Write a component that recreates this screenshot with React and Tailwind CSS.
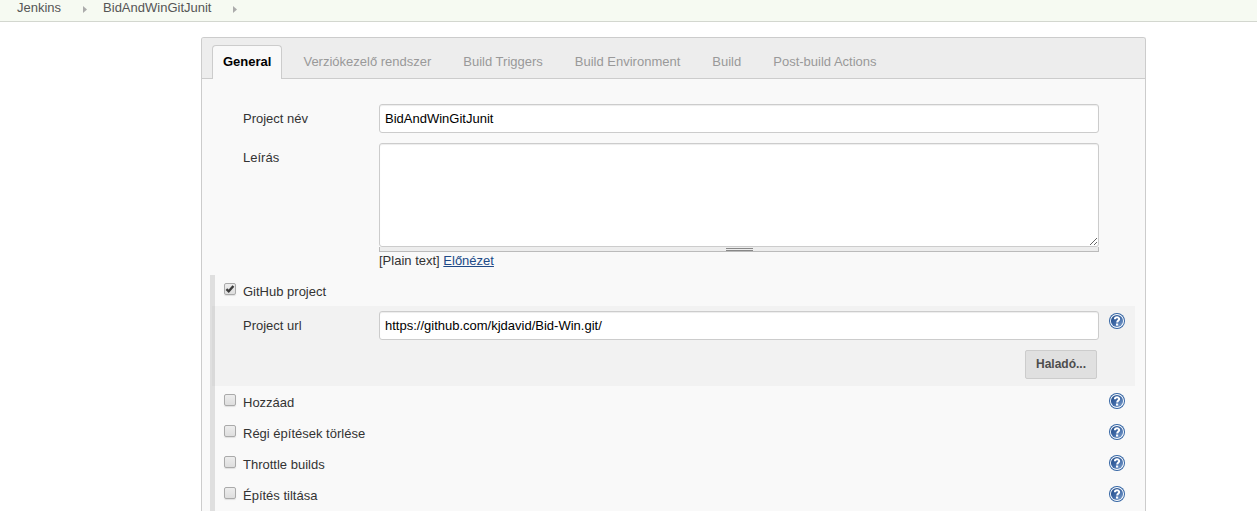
import React, { useId, useState } from "react";

const TABS = [
  "General",
  "Verziókezelő rendszer",
  "Build Triggers",
  "Build Environment",
  "Build",
  "Post-build Actions",
];

const OPTIONS = ["Hozzáad", "Régi építések törlése", "Throttle builds", "Építés tiltása"];

const FIELD =
  "block w-full rounded-[3px] border border-[#ccc] bg-white px-[5px] text-[13px] text-black shadow-[inset_0_1px_1px_rgba(0,0,0,0.075)] outline-none";

function Crumb({ children }) {
  return (
    <li className="flex items-start">
      <a href="#" className="text-[#555]">
        {children}
      </a>
      <svg className="mr-4 ml-[22px] mt-[6px] h-[7px] w-1" viewBox="0 0 4 7" aria-hidden="true">
        <path d="M0 0L4 3.5L0 7Z" fill="#ababab" />
      </svg>
    </li>
  );
}

function HelpButton({ label }) {
  const id = useId();
  return (
    <button type="button" aria-label={label} className="block size-4 shrink-0">
      <svg viewBox="0 0 16 16" className="size-4">
        <defs>
          <linearGradient id={id} x1="0" y1="0" x2="1" y2="1">
            <stop offset="0" stopColor="#204a87" />
            <stop offset="0.5" stopColor="#3f69a6" />
            <stop offset="1" stopColor="#86a8d4" />
          </linearGradient>
        </defs>
        <circle cx="8" cy="8" r="8" fill="#3465a4" />
        <circle cx="8" cy="8" r="7" fill="#fff" />
        <circle cx="8" cy="8" r="6.1" fill={`url(#${id})`} />
        <path
          d="M5.9 6.2C5.9 3.6 10.2 3.7 10.2 6C10.2 7.5 8.2 7.6 8.2 9.6"
          fill="none"
          stroke="#fff"
          strokeWidth="2"
        />
        <rect x="7" y="10.5" width="2.2" height="2.1" fill="#fff" />
      </svg>
    </button>
  );
}

function CheckRow({ label, defaultChecked = false, help = true }) {
  return (
    <div className="flex h-[31px] items-start pl-[9px]">
      <label className="flex flex-1 items-start gap-[7px]">
        <span className="relative mt-2 block size-3">
          <input
            type="checkbox"
            defaultChecked={defaultChecked}
            className="peer block size-3 appearance-none rounded-[2px] border border-[#aaa] bg-linear-to-b from-[#ededed] to-[#dedede] shadow-[0_1px_1px_rgba(0,0,0,0.1)]"
          />
          <svg
            viewBox="0 0 12 12"
            className="pointer-events-none absolute inset-0 hidden size-3 peer-checked:block"
            aria-hidden="true"
          >
            <path d="M2.4 6.2L4.7 8.3L9.4 3" fill="none" stroke="#3c3c3c" strokeWidth="2.4" />
          </svg>
        </span>
        <span className="mt-[9px] leading-4">{label}</span>
      </label>
      {help && (
        <div className="w-[26px] pt-[7px]">
          <HelpButton label={`Help: ${label}`} />
        </div>
      )}
    </div>
  );
}

export default function App() {
  const [active, setActive] = useState("General");
  return (
    <div className="flex h-screen flex-col overflow-hidden bg-white font-['Liberation_Sans',Arial,sans-serif] text-[13px] leading-4 text-[#333]">
      <nav className="h-[22px] shrink-0 border-b border-[#d3d7cf] bg-[#f6faf2] pl-[17px]" aria-label="Breadcrumb">
        <ol className="flex items-start">
          <Crumb>Jenkins</Crumb>
          <Crumb>BidAndWinGitJunit</Crumb>
        </ol>
      </nav>

      <main className="mt-[15px] flex flex-1 pr-[111px] pl-[201px]">
        <form
          className="flex w-full flex-col rounded-t-[3px] border border-b-0 border-[#ccc] bg-[#f9f9f9]"
          onSubmit={(e) => e.preventDefault()}
        >
          <div
            className="flex h-[41px] shrink-0 items-end gap-[10px] rounded-t-[2px] border-b border-[#ccc] bg-[#ededed] pl-[10px]"
            role="tablist"
          >
            {TABS.map((tab) => (
              <button
                key={tab}
                type="button"
                role="tab"
                aria-selected={tab === active}
                onClick={() => setActive(tab)}
                className={
                  tab === active
                    ? "-mb-px h-[34px] rounded-t-[4px] border border-b-0 border-[#ccc] bg-[#f9f9f9] px-[10px] pb-[2px] font-bold text-black"
                    : "-mb-px h-[34px] border border-b-0 border-transparent px-[10px] pb-[2px] text-[#999]"
                }
              >
                {tab}
              </button>
            ))}
          </div>

          <div className="flex flex-1 flex-col pt-[25px] pr-[10px] pl-2">
            <div className="mb-[10px] flex pr-9 pl-[33px]">
              <label htmlFor="name" className="w-[136px] shrink-0 pt-[7px]">
                Project név
              </label>
              <input id="name" type="text" defaultValue="BidAndWinGitJunit" className={`${FIELD} h-[29px]`} />
            </div>

            <div className="mb-[6px] flex pr-9 pl-[33px]">
              <label htmlFor="description" className="w-[136px] shrink-0 pt-[7px]">
                Leírás
              </label>
              <div className="flex-1">
                <textarea id="description" className={`${FIELD} h-[104px]`} />
                <div className="flex h-[5px] flex-col items-center justify-center gap-px border border-t-0 border-[#bbb] bg-[#ededed]">
                  <div className="h-px w-[27px] bg-[#888]" />
                  <div className="h-px w-[27px] bg-[#888]" />
                </div>
                <p className="mt-px">
                  [Plain text]{" "}
                  <a href="#" className="text-[#204a87] underline">
                    Előnézet
                  </a>
                </p>
              </div>
            </div>

            <div className="flex-1 border-l-[5px] border-[#dfdfdf]">
              <CheckRow label="GitHub project" defaultChecked help={false} />
              <div className="-ml-[3px] h-20 border-l-[3px] border-[#d9d9d9] bg-[#f2f2f2] pt-[5px]">
                <div className="flex pl-7">
                  <label htmlFor="url" className="w-[136px] shrink-0 pt-[7px]">
                    Project url
                  </label>
                  <input
                    id="url"
                    type="text"
                    defaultValue="https://github.com/kjdavid/Bid-Win.git/"
                    className={`${FIELD} h-[29px]`}
                  />
                  <div className="w-9 shrink-0 pt-[2px] pl-[10px]">
                    <HelpButton label="Help: Project url" />
                  </div>
                </div>
                <div className="mt-[10px] flex justify-end pr-[38px]">
                  <button
                    type="button"
                    className="h-[29px] rounded-[2px] border border-[#ccc] bg-[#e0e0e0] px-[10px] pb-[2px] text-[12px] font-bold text-[#4d4d4d]"
                  >
                    Haladó...
                  </button>
                </div>
              </div>
              {OPTIONS.map((label) => (
                <CheckRow key={label} label={label} />
              ))}
            </div>
          </div>
        </form>
      </main>
    </div>
  );
}
